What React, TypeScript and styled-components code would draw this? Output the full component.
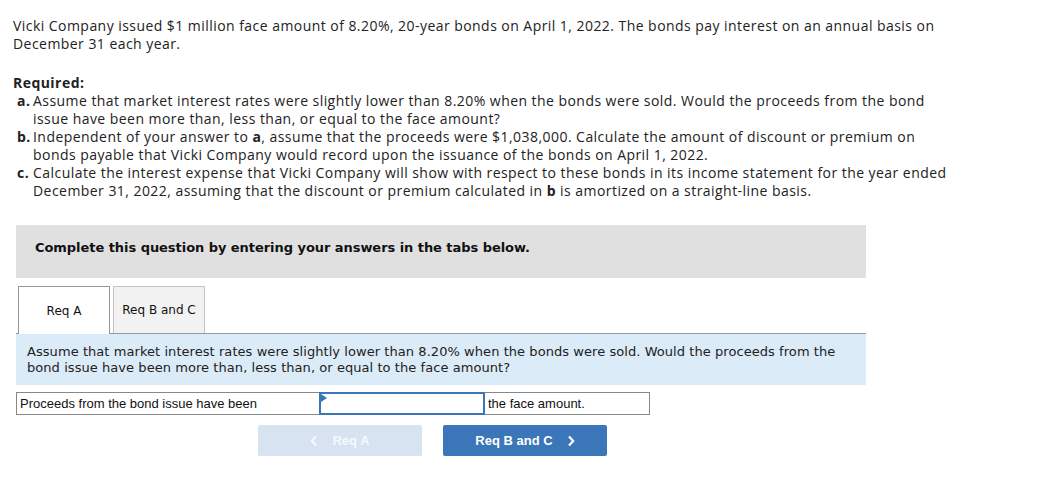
import React from 'react'
import styled, { createGlobalStyle } from 'styled-components'

const GlobalStyle = createGlobalStyle`
  body {
    margin: 0;
    background: #fff;
  }
`

const Page = styled.div`
  padding: 17px 0 0 13px;
  width: 942px;
  font-family: 'Open Sans', sans-serif;
  font-size: 14px;
  letter-spacing: 0.45px;
  line-height: 18px;
  color: #222;
`

const Intro = styled.p`
  margin: 0;
`

const Required = styled.div`
  margin-top: 21px;
  font-weight: bold;
`

const ReqList = styled.ol`
  list-style: none;
  margin: 0;
  padding: 0;
`

const ReqItem = styled.li`
  display: flex;
`

const ReqLetter = styled.span`
  flex: 0 0 20px;
  padding-left: 4px;
  font-weight: bold;
  box-sizing: border-box;
`

const Strong = styled.b`
  display: inline-block;
  line-height: 18px;
  height: 18px;
  overflow: hidden;
  vertical-align: top;
`

const Work = styled.div`
  margin: 25px 0 0 3px;
  width: 850px;
  letter-spacing: normal;
`

const Banner = styled.div`
  height: 53px;
  box-sizing: border-box;
  padding: 14px 19px 0;
  background: #e0e0e0;
  font-family: 'DejaVu Sans', Verdana, sans-serif;
  font-size: 13px;
  font-weight: bold;
  letter-spacing: -0.05px;
  color: #111;
`

const TabBar = styled.div`
  display: flex;
  gap: 3px;
  margin-top: 8px;
  padding-left: 2px;
  border-bottom: 1px solid #999;
`

const Tab = styled.div<{ $active?: boolean }>`
  width: 92px;
  box-sizing: border-box;
  display: flex;
  align-items: center;
  justify-content: center;
  border: 1px solid ${(p) => (p.$active ? '#999' : '#c4c4c4')};
  border-bottom: none;
  margin-bottom: ${(p) => (p.$active ? '-1px' : '0')};
  height: ${(p) => (p.$active ? '48px' : '47px')};
  background: ${(p) => (p.$active ? '#fff' : '#f2f2f2')};
  font-family: 'DejaVu Sans', Verdana, sans-serif;
  font-size: 12px;
  color: #111;
`

const Prompt = styled.div`
  height: 51px;
  box-sizing: border-box;
  padding: 10px 11px 0;
  background: #dcebf8;
  font-family: 'DejaVu Sans', Verdana, sans-serif;
  font-size: 13px;
  letter-spacing: 0.06px;
  line-height: 16px;
  color: #222;
`

const AnswerRow = styled.div`
  display: flex;
  width: 634px;
  height: 23px;
  margin-top: 7px;
  box-sizing: border-box;
  border: 1px solid #888;
  font-family: 'Liberation Sans', Arial, sans-serif;
  font-size: 13px;
  color: #111;
`

const Cell = styled.div<{ $w: number }>`
  width: ${(p) => p.$w}px;
  box-sizing: border-box;
  padding-left: 3px;
  display: flex;
  align-items: center;
  & + & {
    border-left: 1px solid #888;
  }
`

const Blank = styled.div`
  position: relative;
  width: 166px;
  margin: -1px 0;
  box-sizing: border-box;
  border: 2px solid #3a76b8;
  background: #fff;
  &::before {
    content: '';
    position: absolute;
    left: 0;
    top: 0;
    border-top: 4px solid transparent;
    border-bottom: 4px solid transparent;
    border-left: 6px solid #3a76b8;
  }
`

const NavRow = styled.div`
  display: flex;
  gap: 21px;
  margin: 10px 0 0 242px;
`

const NavButton = styled.div<{ $enabled?: boolean }>`
  width: 164px;
  height: 31px;
  display: flex;
  align-items: center;
  justify-content: center;
  gap: 14px;
  border-radius: 2px;
  background: ${(p) => (p.$enabled ? '#3a76b8' : '#d7e3f1')};
  color: ${(p) => (p.$enabled ? '#fff' : '#f4f8fc')};
  font-family: 'Liberation Sans', Arial, sans-serif;
  font-size: 13px;
  font-weight: bold;
`

const Chevron = ({ dir }: { dir: 'left' | 'right' }) => (
  <svg width="8" height="12" viewBox="0 0 8 12">
    <polyline
      points={dir === 'left' ? '6,1.5 1.8,6 6,10.5' : '2,1.5 6.2,6 2,10.5'}
      fill="none"
      stroke="currentColor"
      strokeWidth="2.2"
    />
  </svg>
)

export default function App() {
  return (
    <>
      <GlobalStyle />
      <Page>
        <Intro>
          Vicki Company issued $1 million face amount of 8.20%, 20-year bonds on April 1, 2022. The bonds pay
          interest on an annual basis on December 31 each year.
        </Intro>
        <Required>Required:</Required>
        <ReqList>
          <ReqItem>
            <ReqLetter>a.</ReqLetter>
            <span>
              Assume that market interest rates were slightly lower than 8.20% when the bonds were sold. Would the
              proceeds from the bond issue have been more than, less than, or equal to the face amount?
            </span>
          </ReqItem>
          <ReqItem>
            <ReqLetter>b.</ReqLetter>
            <span>
              Independent of your answer to <Strong>a</Strong>, assume that the proceeds were $1,038,000. Calculate the
              amount of discount or premium on bonds payable that Vicki Company would record upon the issuance of the
              bonds on April 1, 2022.
            </span>
          </ReqItem>
          <ReqItem>
            <ReqLetter>c.</ReqLetter>
            <span>
              Calculate the interest expense that Vicki Company will show with respect to these bonds in its income
              statement for the year ended December 31, 2022, assuming that the discount or premium calculated in{' '}
              <Strong>b</Strong> is amortized on a straight-line basis.
            </span>
          </ReqItem>
        </ReqList>

        <Work>
          <Banner>Complete this question by entering your answers in the tabs below.</Banner>
          <TabBar>
            <Tab $active>Req A</Tab>
            <Tab>Req B and C</Tab>
          </TabBar>
          <Prompt>
            Assume that market interest rates were slightly lower than 8.20% when the bonds were sold. Would the
            proceeds from the bond issue have been more than, less than, or equal to the face amount?
          </Prompt>
          <AnswerRow>
            <Cell $w={302}>Proceeds from the bond issue have been</Cell>
            <Blank />
            <Cell $w={164}>the face amount.</Cell>
          </AnswerRow>
          <NavRow>
            <NavButton>
              <Chevron dir="left" />
              Req A
            </NavButton>
            <NavButton $enabled>
              Req B and C
              <Chevron dir="right" />
            </NavButton>
          </NavRow>
        </Work>
      </Page>
    </>
  )
}
